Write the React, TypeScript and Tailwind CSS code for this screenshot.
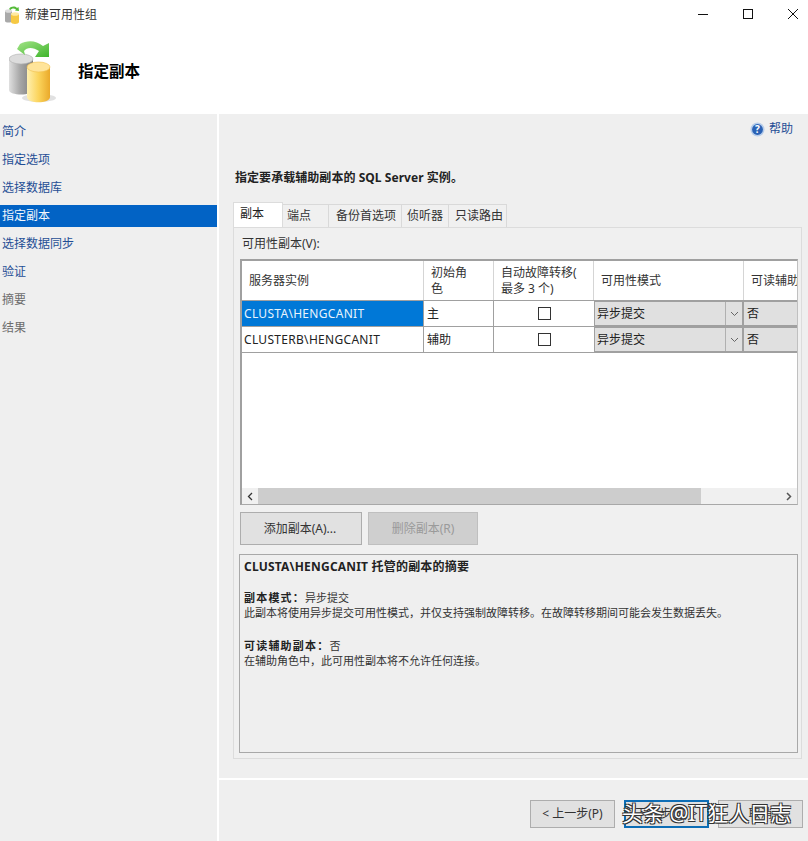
import React from "react";

const FONT = "font-['Noto_Sans','Noto_Sans_CJK_SC',sans-serif]";

function BigIcon() {
  return (
    <svg width="48" height="64" viewBox="0 0 48 64" className="block">
      <defs>
        <linearGradient id="g1" x1="0" x2="1" y1="0" y2="0">
          <stop offset="0" stopColor="#e0e0e0" />
          <stop offset="0.45" stopColor="#a8a8a8" />
          <stop offset="1" stopColor="#7c7c7c" />
        </linearGradient>
        <linearGradient id="y1" x1="0" x2="1" y1="0" y2="0">
          <stop offset="0" stopColor="#fff0b0" />
          <stop offset="0.5" stopColor="#fbd45c" />
          <stop offset="1" stopColor="#eaa92a" />
        </linearGradient>
        <linearGradient id="gr" x1="0" x2="1" y1="0" y2="1">
          <stop offset="0" stopColor="#a4e488" />
          <stop offset="1" stopColor="#3fb52c" />
        </linearGradient>
      </defs>
      <ellipse cx="30" cy="58" rx="17" ry="4" fill="#d4d4d4" opacity="0.7" />
      <path d="M0 19 V50 C0 56 24 56 24 50 V19 Z" fill="url(#g1)" />
      <ellipse cx="12" cy="19" rx="12" ry="5" fill="#dcdcdc" stroke="#b0b0b0" strokeWidth="0.6" />
      <path d="M18 27 V57 C18 64 41 64 41 57 V27 Z" fill="url(#y1)" />
      <ellipse cx="29.5" cy="27" rx="11.5" ry="5" fill="#ffe49a" stroke="#f0c050" strokeWidth="0.6" />
      <path d="M8 9 L11 4 C18 0 27 0 34 6 L40 3 L40 17 L26 17 L30 11 C24 7 18 7 15 11 L16 15 Z" fill="url(#gr)" />
    </svg>
  );
}

function SmallIcon() {
  return (
    <svg width="16" height="18" viewBox="0 0 16 18" className="block">
      <path d="M0 5 V15 C0 17 7 17 7 15 V5 Z" fill="#a9a9a9" />
      <ellipse cx="3.5" cy="5" rx="3.5" ry="1.8" fill="#dcdcdc" />
      <path d="M6 8 V16 C6 18.5 14 18.5 14 16 V8 Z" fill="#f6c944" />
      <ellipse cx="10" cy="8" rx="4" ry="1.8" fill="#ffeaa0" />
      <path d="M4 3 C6 0 10 0 12 2 L13.5 1 L14 5 L10 4.5 L11 3.5 C9 2 7 2 5.5 4 Z" fill="#55bb3a" />
    </svg>
  );
}

const navItems: [string, string][] = [
  ["简介", "link"],
  ["指定选项", "link"],
  ["选择数据库", "link"],
  ["指定副本", "active"],
  ["选择数据同步", "link"],
  ["验证", "link"],
  ["摘要", "muted"],
  ["结果", "muted"],
];

function Sidebar() {
  return (
    <div className="w-[217px] shrink-0 bg-[#efefef] pt-[7px]">
      {navItems.map(([label, kind]) => (
        <div
          key={label}
          className={
            "h-[22px] mb-[6px] pl-[2px] flex items-center text-[12px] " +
            (kind === "active"
              ? "bg-[#0263c5] text-[#f2f6fb]"
              : kind === "link"
              ? "text-[#1f4e95]"
              : "text-[#6d6d6d]")
          }
        >
          {label}
        </div>
      ))}
    </div>
  );
}

function Tabs() {
  const tabs: [string, string][] = [
    ["端点", "w-[46px] pl-[4px]"],
    ["备份首选项", "w-[73px] pl-[7px]"],
    ["侦听器", "w-[47px] pl-[5px]"],
    ["只读路由", "w-[58px] pl-[6px]"],
  ];
  return (
    <div className="flex items-end h-[25px] ml-[-2px] relative z-10">
      <div className="h-[25px] w-[50px] bg-white border border-b-0 border-[#dcdcdc] pl-[6px] pt-[2px] text-[12px] text-[#222]">
        副本
      </div>
      {tabs.map(([t, w]) => (
        <div
          key={t}
          className={`h-[23px] ${w} flex items-center bg-[#f0f0f0] border border-l-0 border-[#d9d9d9] border-b-0 text-[12px] text-[#333] whitespace-nowrap`}
        >
          {t}
        </div>
      ))}
    </div>
  );
}

function HeadCell({ w, children }: { w: string; children: React.ReactNode }) {
  return (
    <div className={`${w} shrink-0 h-[39px] pl-[7px] border-r border-[#d5d5d5] flex items-center text-[12px] leading-[16px] text-[#333] overflow-hidden`}>
      <div>{children}</div>
    </div>
  );
}

function ModeCell() {
  return (
    <div className="w-[150px] shrink-0 h-full bg-[#e0e0e0] border-y border-l border-r-2 border-[#a0a0a0] flex items-center text-[12px] text-[#222]">
      <span className="pl-[2px] flex-1">异步提交</span>
      <span className="w-[17px] h-full border-l border-[#b0b0b0] flex items-center justify-center">
        <svg width="9" height="6" viewBox="0 0 9 6">
          <path d="M1 1 L4.5 4.5 L8 1" fill="none" stroke="#666" strokeWidth="1" />
        </svg>
      </span>
    </div>
  );
}

function Row({ name, role, selected }: { name: string; role: string; selected?: boolean }) {
  return (
    <div className="flex h-[26px] border-b border-[#a0a0a0]">
      <div className={"w-[182px] shrink-0 border-r border-[#a0a0a0] pl-[2px] flex items-center text-[12px] tracking-[0.3px] " + (selected ? "bg-[#0078d7] text-[#e8f3fc]" : "bg-white text-[#222]")}>
        {name}
      </div>
      <div className="w-[70px] shrink-0 border-r border-[#a0a0a0] pl-[3px] flex items-center text-[12px] text-[#222]">{role}</div>
      <div className="w-[100px] shrink-0 flex items-center justify-center">
        <span className="w-[13px] h-[13px] border border-[#333] bg-white" />
      </div>
      <ModeCell />
      <div className="flex-1 h-full bg-[#e0e0e0] border-y border-[#a0a0a0] pl-[3px] flex items-center text-[12px] text-[#222]">否</div>
    </div>
  );
}

function Grid() {
  return (
    <div className="h-[246px] mt-[7px] border-t-2 border-l-2 border-r border-b border-t-[#a0a0a0] border-l-[#a0a0a0] border-r-[#c0c0c0] border-b-[#a8a8a8] bg-white flex flex-col overflow-hidden">
      <div className="flex h-[40px] border-b border-[#a0a0a0] shrink-0">
        <HeadCell w="w-[182px]">服务器实例</HeadCell>
        <HeadCell w="w-[70px]">初始角<br />色</HeadCell>
        <HeadCell w="w-[100px]">自动故障转移(<br />最多 3 个)</HeadCell>
        <HeadCell w="w-[150px]">可用性模式</HeadCell>
        <div className="flex-1 h-[39px] flex items-center pl-[7px] text-[12px] text-[#333] whitespace-nowrap overflow-hidden">可读辅助</div>
      </div>
      <Row name="CLUSTA\HENGCANIT" role="主" selected />
      <Row name="CLUSTERB\HENGCANIT" role="辅助" />
      <div className="flex-1" />
      <div className="h-[16px] shrink-0 flex bg-[#f0f0f0] items-center">
        <span className="w-[16px] h-full flex items-center justify-center">
          <svg width="6" height="9" viewBox="0 0 6 9"><path d="M5 1 L1.5 4.5 L5 8" fill="none" stroke="#333" strokeWidth="1.3" /></svg>
        </span>
        <span className="w-[443px] h-full bg-[#cdcdcd]" />
        <span className="flex-1" />
        <span className="w-[16px] h-full flex items-center justify-center">
          <svg width="6" height="9" viewBox="0 0 6 9"><path d="M1 1 L4.5 4.5 L1 8" fill="none" stroke="#555" strokeWidth="1.5" /></svg>
        </span>
      </div>
    </div>
  );
}

function Summary() {
  return (
    <div className="mt-[9px] ml-[-1px] h-[199px] border border-[#a8a8a8] bg-[#efefef] pl-[4px] pt-[5px] text-[11px] leading-[14px] text-[#333]">
      <div className="text-[12px] leading-[14px] font-bold text-[#222] tracking-[0.2px]">CLUSTA\HENGCANIT 托管的副本的摘要</div>
      <div className="mt-[17px]"><b className="text-[#222] tracking-[1.2px]">副本模式：</b>异步提交</div>
      <div className="mt-[1px]">此副本将使用异步提交可用性模式，并仅支持强制故障转移。在故障转移期间可能会发生数据丢失。</div>
      <div className="mt-[19px]"><b className="text-[#222] tracking-[1.2px]">可读辅助副本：</b>否</div>
      <div className="mt-[1px]">在辅助角色中，此可用性副本将不允许任何连接。</div>
    </div>
  );
}

function WizardButton({ children, focus }: { children?: React.ReactNode; focus?: boolean }) {
  return (
    <div className={"w-[85px] h-[28px] flex items-center justify-center text-[12px] text-[#333] bg-[#e1e1e1] " + (focus ? "border-2 border-[#0d6db5]" : "border border-[#adadad]")}>
      {children}
    </div>
  );
}

export default function App() {
  return (
    <div className={`${FONT} w-[808px] h-[841px] bg-white flex flex-col overflow-hidden relative`}>
      <div className="h-[114px] shrink-0 bg-white flex flex-col">
        <div className="h-[30px] flex items-center pl-[5px]">
          <SmallIcon />
          <span className="ml-[4px] text-[12px] text-[#333]">新建可用性组</span>
          <div className="ml-auto flex items-center">
            <svg width="45" height="30" viewBox="0 0 45 30"><path d="M18 14.5 H28" stroke="#111" strokeWidth="1" /></svg>
            <svg width="45" height="30" viewBox="0 0 45 30"><rect x="18.5" y="9.5" width="9" height="9" fill="none" stroke="#111" strokeWidth="1" /></svg>
            <svg width="38" height="30" viewBox="0 0 38 30"><path d="M18 9 L28 19 M28 9 L18 19" stroke="#111" strokeWidth="1" /></svg>
          </div>
        </div>
        <div className="flex items-center flex-1 pl-[9px]">
          <BigIcon />
          <span className="ml-[21px] text-[15.5px] font-bold text-black">指定副本</span>
        </div>
      </div>

      <div className="flex flex-1 min-h-0">
        <Sidebar />
        <div className="w-[2px] shrink-0 bg-white" />
        <div className="flex-1 bg-[#efefef] flex flex-col min-w-0">
          <div className="flex justify-end items-center h-[16px] mt-[7px] pr-[15px] text-[12px] text-[#1f4e95]">
            <svg width="15" height="15" viewBox="0 0 15 15" className="mr-[4px]">
              <circle cx="7.5" cy="7.5" r="7" fill="#b7cdea" />
              <circle cx="7.5" cy="7.5" r="5.4" fill="#2a62b5" />
              <text x="7.5" y="11" fontSize="10" fontWeight="bold" textAnchor="middle" fill="#fff">?</text>
            </svg>
            帮助
          </div>
          <div className="mt-[33px] ml-[16px] text-[12px] leading-[16px] font-bold text-[#222] tracking-[0.05px]">
            指定要承载辅助副本的 SQL Server 实例。
          </div>
          <div className="mt-[16px] ml-[16px]">
            <Tabs />
            <div className="ml-[-2px] w-[569px] h-[532px] border border-[#dcdcdc] bg-[#f0f0f0] pl-[6px] pr-[3px] pt-[8px] flex flex-col">
              <div className="pl-[2px] text-[12px] leading-[16px] text-[#333]">可用性副本(V):</div>
              <Grid />
              <div className="flex gap-[6px] mt-[7px]">
                <div className="w-[122px] h-[33px] pr-[2px] border border-[#adadad] bg-[#e1e1e1] flex items-center justify-center text-[12px] text-[#333]">添加副本(A)...</div>
                <div className="w-[110px] h-[33px] border border-[#bfbfbf] bg-[#cfcfcf] flex items-center justify-center text-[12px] text-[#9a9a9a]">删除副本(R)</div>
              </div>
              <Summary />
            </div>
          </div>
          <div className="mt-[19px] h-[2px] bg-white shrink-0" />
          <div className="flex justify-end gap-[9px] pr-[5px] mt-[20px]">
            <WizardButton>&lt; 上一步(P)</WizardButton>
            <WizardButton focus>下一步(N) &gt;</WizardButton>
            <WizardButton>取消</WizardButton>
          </div>
        </div>
      </div>

      <div className="absolute left-[622px] top-[798px] text-[21px] leading-[30px] text-white whitespace-nowrap [text-shadow:1px_1px_0_#333,-1px_-1px_0_#333,1px_-1px_0_#333,-1px_1px_0_#333] pointer-events-none">
        头条 @IT狂人日志
      </div>
    </div>
  );
}
